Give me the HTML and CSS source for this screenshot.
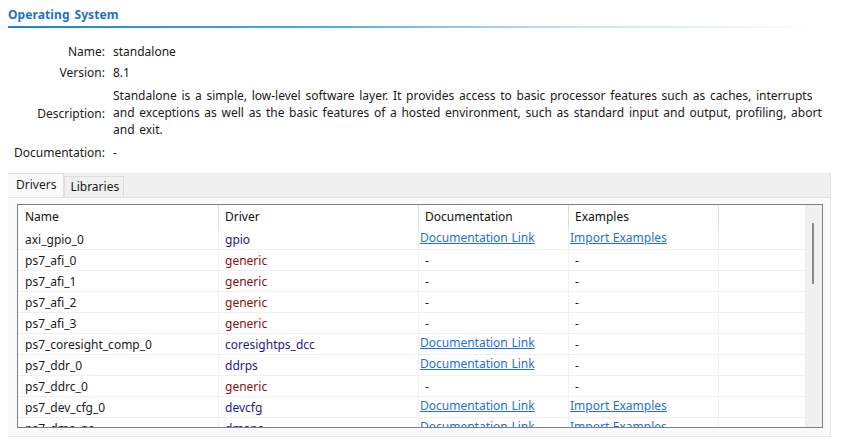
FILE: index.html
```html
<!DOCTYPE html>
<html>
<head>
<meta charset="utf-8">
<link rel="stylesheet" href="styles.css">
</head>
<body>
<div class="page">
  <div class="title">Operating System</div>
  <div class="props">
    <div class="lbl">Name:</div><div class="val">standalone</div>
    <div class="lbl">Version:</div><div class="val">8.1</div>
    <div class="lbl desc-lbl">Description:</div><div class="val desc">Standalone is a simple, low-level software layer. It provides access to basic processor features such as caches, interrupts and exceptions as well as the basic features of a hosted environment, such as standard input and output, profiling, abort and exit.</div>
    <div class="lbl">Documentation:</div><div class="val">-</div>
  </div>
  <div class="folder">
    <div class="tabbar">
      <div class="tab active">Drivers</div>
      <div class="tab">Libraries</div>
    </div>
    <div class="panel">
      <div class="tablebox">
        <div class="grid">
          <div class="row head">
            <div class="c c1">Name</div><div class="c c2">Driver</div><div class="c c3">Documentation</div><div class="c c4">Examples</div><div class="c c5"></div>
          </div>
          <div class="row">
            <div class="c c1">axi_gpio_0</div><div class="c c2 drv">gpio</div><div class="c c3 lk"><span class="link">Documentation Link</span></div><div class="c c4 lk"><span class="link">Import Examples</span></div><div class="c c5"></div>
          </div>
          <div class="row">
            <div class="c c1">ps7_afi_0</div><div class="c c2 gen">generic</div><div class="c c3">-</div><div class="c c4">-</div><div class="c c5"></div>
          </div>
          <div class="row">
            <div class="c c1">ps7_afi_1</div><div class="c c2 gen">generic</div><div class="c c3">-</div><div class="c c4">-</div><div class="c c5"></div>
          </div>
          <div class="row">
            <div class="c c1">ps7_afi_2</div><div class="c c2 gen">generic</div><div class="c c3">-</div><div class="c c4">-</div><div class="c c5"></div>
          </div>
          <div class="row">
            <div class="c c1">ps7_afi_3</div><div class="c c2 gen">generic</div><div class="c c3">-</div><div class="c c4">-</div><div class="c c5"></div>
          </div>
          <div class="row">
            <div class="c c1">ps7_coresight_comp_0</div><div class="c c2 drv">coresightps_dcc</div><div class="c c3 lk"><span class="link">Documentation Link</span></div><div class="c c4">-</div><div class="c c5"></div>
          </div>
          <div class="row">
            <div class="c c1">ps7_ddr_0</div><div class="c c2 drv">ddrps</div><div class="c c3 lk"><span class="link">Documentation Link</span></div><div class="c c4">-</div><div class="c c5"></div>
          </div>
          <div class="row">
            <div class="c c1">ps7_ddrc_0</div><div class="c c2 gen">generic</div><div class="c c3">-</div><div class="c c4">-</div><div class="c c5"></div>
          </div>
          <div class="row">
            <div class="c c1">ps7_dev_cfg_0</div><div class="c c2 drv">devcfg</div><div class="c c3 lk"><span class="link">Documentation Link</span></div><div class="c c4 lk"><span class="link">Import Examples</span></div><div class="c c5"></div>
          </div>
          <div class="row">
            <div class="c c1">ps7_dma_ns</div><div class="c c2 drv">dmaps</div><div class="c c3 lk"><span class="link">Documentation Link</span></div><div class="c c4 lk"><span class="link">Import Examples</span></div><div class="c c5"></div>
          </div>
        </div>
        <div class="scrollbar"><div class="thumb"></div></div>
      </div>
    </div>
  </div>
</div>
</body>
</html>
```
FILE: styles.css
```css
html, body {
  margin: 0;
  padding: 0;
  background: #ffffff;
}
body {
  font-family: "Noto Sans", "Open Sans", sans-serif;
  font-size: 12px;
  color: #1a1a1a;
  word-spacing: 1.6px;
}
.page {
  padding: 0 11px 0 8px;
  width: 822px;
}
.title {
  font-weight: bold;
  color: #1a73c9;
  font-size: 12px;
  line-height: 17px;
  padding-top: 6px;
  padding-bottom: 5px;
  letter-spacing: 0.1px;
  background: linear-gradient(to right, #1a80d9 0%, #5aa8e6 40%, #c9e2f6 70%, rgba(255,255,255,0) 100%) no-repeat left bottom / 817px 2px;
}
.props {
  display: grid;
  grid-template-columns: 97px 1fr;
  column-gap: 8px;
  row-gap: 4px;
  margin-top: 15px;
  line-height: 17px;
  padding-right: 4px;
}
.lbl {
  text-align: right;
}
.desc-lbl {
  align-self: center;
  margin-top: 2px;
}
.desc {
  margin-top: 2px;
  margin-bottom: 2px;
}
.folder {
  margin-top: 12px;
  width: 822px;
  background: #f0f0f0;
  border-right: 1px solid #e6e6e6;
  border-bottom: 1px solid #e6e6e6;
}
.tabbar {
  display: flex;
  align-items: flex-end;
  height: 24px;
}
.tab {
  padding: 0 4px 0 5px;
  height: 21px;
  line-height: 20px;
  box-sizing: border-box;
  border: 1px solid #dcdcdc;
  border-bottom: none;
  background: #f0f0f0;
  word-spacing: 0;
}
.tab.active {
  height: 24px;
  line-height: 22px;
  background: #fafafa;
  border-color: #e0e0e0;
  padding: 0 7px 0 8px;
  border-left: none;
}
.panel {
  background: #fafafa;
  border-top: 1px solid #e3e3e3;
  padding: 6px 7px 8px 9px;
}
.tablebox {
  display: flex;
  height: 222px;
  border: 1px solid #7d8088;
  background: #ffffff;
  overflow: hidden;
}
.grid {
  flex: 1;
  overflow: hidden;
}
.row {
  display: flex;
  box-sizing: border-box;
  height: 21px;
  border-bottom: 1px solid #f0f0f0;
  line-height: 21px;
}
.row.head {
  height: 24px;
  line-height: 24px;
  border-bottom: none;
}
.c {
  box-sizing: border-box;
  padding-left: 6px;
  border-right: 1px solid #f0f0f0;
  white-space: nowrap;
  overflow: hidden;
}
.head .c {
  border-right: 1px solid #dcdcdc;
  color: #111;
}
.c1 { width: 201px; padding-left: 7px; }
.c2 { width: 200px; }
.c3 { width: 150px; }
.c4 { width: 150px; }
.c5 { flex: 1; border-right: none; }
.head .c5 { border-right: none; }
.lk { padding-left: 1px; line-height: 17px; }
.link {
  color: #1f6fd6;
  text-decoration: underline;
  word-spacing: 0.5px;
}
.drv { color: #1e1a8a; }
.gen { color: #8e0c0c; }
.scrollbar {
  width: 17px;
  background: #f0f0f0;
  position: relative;
  flex: none;
}
.thumb {
  position: absolute;
  left: 7px;
  top: 18px;
  width: 2px;
  height: 61px;
  background: #8a8a8a;
}
```
